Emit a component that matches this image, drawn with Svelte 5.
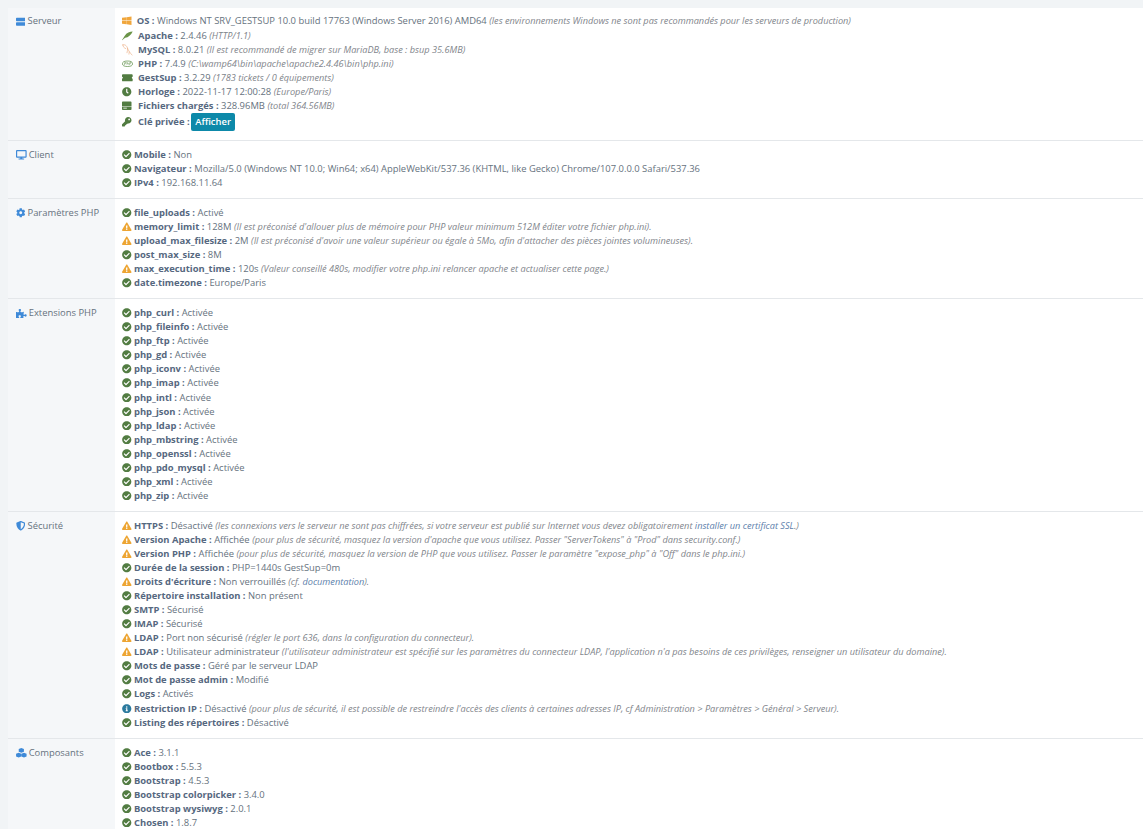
<script>
  const P = {
    check: [512, 'M504 256c0 136.967-111.033 248-248 248S8 392.967 8 256 119.033 8 256 8s248 111.033 248 248zM227.314 387.314l184-184c6.248-6.248 6.248-16.379 0-22.627l-22.627-22.627c-6.248-6.249-16.379-6.249-22.628 0L216 308.118l-70.059-70.059c-6.248-6.248-16.379-6.248-22.628 0l-22.627 22.627c-6.248 6.248-6.248 16.379 0 22.627l104 104c6.249 6.249 16.379 6.249 22.628.001z', '#527c42'],
    warn: [576, 'M569.517 440.013C587.975 472.007 564.806 512 527.94 512H48.054c-36.937 0-59.999-40.055-41.577-71.987L246.423 24.035c18.467-32.009 64.72-31.951 83.154 0l239.94 416.028zM288 354c-25.405 0-46 20.595-46 46s20.595 46 46 46 46-20.595 46-46-20.595-46-46-46zm-43.673-165.346l7.418 136c.347 6.364 5.609 11.346 11.982 11.346h48.546c6.373 0 11.635-4.982 11.982-11.346l7.418-136c.375-6.874-5.098-12.654-11.982-12.654h-63.383c-6.884 0-12.356 5.78-11.981 12.654z', '#eda533'],
    info: [512, 'M256 8C119.043 8 8 119.083 8 256c0 136.997 111.043 248 248 248s248-111.003 248-248C504 119.083 392.957 8 256 8zm0 110c23.196 0 42 18.804 42 42s-18.804 42-42 42-42-18.804-42-42 18.804-42 42-42zm56 254c0 6.627-5.373 12-12 12h-88c-6.627 0-12-5.373-12-12v-24c0-6.627 5.373-12 12-12h12v-64h-12c-6.627 0-12-5.373-12-12v-24c0-6.627 5.373-12 12-12h64c6.627 0 12 5.373 12 12v100h12c6.627 0 12 5.373 12 12v24z', '#2b7a9e'],
    clock: [512, 'M256 8C119 8 8 119 8 256s111 248 248 248 248-111 248-248S393 8 256 8zm92.49 313h0l-20 25a16 16 0 0 1-22.49 2.5h0l-67-49.72a40 40 0 0 1-15-31.23V112a16 16 0 0 1 16-16h32a16 16 0 0 1 16 16v144l58 42.5a16 16 0 0 1 2.49 22.5z', '#527c42'],
    key: [512, 'M512 176.001C512 273.203 433.202 352 336 352c-11.22 0-22.19-1.062-32.827-3.069l-24.012 27.014A23.999 23.999 0 0 1 261.223 384H224v40c0 13.255-10.745 24-24 24h-40v40c0 13.255-10.745 24-24 24H24c-13.255 0-24-10.745-24-24v-78.059c0-6.365 2.529-12.47 7.029-16.971l161.802-161.802C163.108 213.814 160 195.271 160 176 160 78.798 238.797.001 335.999 0 433.488-.001 512 78.511 512 176.001zM336 128c0 26.51 21.49 48 48 48s48-21.49 48-48-21.49-48-48-48-48 21.49-48 48z', '#527c42'],
    ticket: [576, 'M48 64h480c26.51 0 48 21.49 48 48v96c-26.51 0-48 21.49-48 48s21.49 48 48 48v96c0 26.51-21.49 48-48 48H48c-26.51 0-48-21.49-48-48v-96c26.51 0 48-21.49 48-48s-21.49-48-48-48v-96c0-26.51 21.49-48 48-48z', '#527c42'],
    hdd: [512, 'M40 24h432c22 0 40 18 40 40v200H0V64c0-22 18-40 40-40zM0 296h512v152c0 22-18 40-40 40H40c-22 0-40-18-40-40V296zm70 70v44h190v-44H70z', '#527c42'],
    feather: [576, 'M576 30C430 40 250 90 140 270 110 320 60 400 10 470l24 24c50-60 90-110 140-130 170-10 310-150 402-334z', '#6b9448'],
    windows: [512, 'M0 100l244-36v180H0V100zm0 312l244 36V268H0v144zm256 38l256 36V268H256v182zm0-388v182h256V26L256 62z', '#f0a63c']
  };

  const HEAD = {
    server: [512, 'M38 36h436c21 0 38 17 38 38v120c0 21-17 38-38 38H38c-21 0-38-17-38-38V74c0-21 17-38 38-38zm0 244h436c21 0 38 17 38 38v120c0 21-17 38-38 38H38c-21 0-38-17-38-38V318c0-21 17-38 38-38z'],
    desktop: [576, 'M528 0H48C21.5 0 0 21.5 0 48v320c0 26.5 21.5 48 48 48h192l-16 48h-72c-13.3 0-24 10.7-24 24s10.7 24 24 24h272c13.3 0 24-10.7 24-24s-10.7-24-24-24h-72l-16-48h192c26.5 0 48-21.5 48-48V48c0-26.5-21.5-48-48-48zm-16 352H64V64h448v288z'],
    cog: [512, 'M487.4 315.7l-42.6-24.6c4.3-23.2 4.3-47 0-70.2l42.6-24.6c4.9-2.8 7.1-8.6 5.5-14-11.1-35.6-30-67.8-54.7-94.6-3.8-4.1-10-5.1-14.8-2.3L380.8 110c-17.9-15.4-38.5-27.3-60.8-35.1V25.8c0-5.6-3.9-10.5-9.4-11.7-36.7-8.2-74.3-7.8-109.2 0-5.5 1.2-9.4 6.1-9.4 11.7V75c-22.2 7.9-42.8 19.8-60.8 35.1L88.7 85.5c-4.9-2.8-11-1.9-14.8 2.3-24.7 26.7-43.6 58.9-54.7 94.6-1.7 5.4.6 11.2 5.5 14L67.3 221c-4.3 23.2-4.3 47 0 70.2l-42.6 24.6c-4.9 2.8-7.1 8.6-5.5 14 11.1 35.6 30 67.8 54.7 94.6 3.8 4.1 10 5.1 14.8 2.3l42.6-24.6c17.9 15.4 38.5 27.3 60.8 35.1v49.2c0 5.6 3.9 10.5 9.4 11.7 36.7 8.2 74.3 7.8 109.2 0 5.5-1.2 9.4-6.1 9.4-11.7v-49.2c22.2-7.9 42.8-19.8 60.8-35.1l42.6 24.6c4.9 2.8 11 1.9 14.8-2.3 24.7-26.7 43.6-58.9 54.7-94.6 1.5-5.5-.7-11.3-5.6-14.1zM256 336c-44.1 0-80-35.9-80-80s35.9-80 80-80 80 35.9 80 80-35.9 80-80 80z'],
    puzzle: [576, 'M519.442 288.651c-41.519 0-59.5 31.593-82.058 31.593C377.409 320.244 432 144 432 144s-196.288 80-196.288-3.297c0-35.827 36.288-46.25 36.288-85.985C272 19.216 243.885 0 210.539 0c-34.654 0-66.366 18.891-66.366 56.346 0 41.364 31.711 59.277 31.711 81.75C175.885 207.719 0 166.758 0 166.758v333.237s178.635 41.047 178.635-28.662c0-22.473-40-40.107-40-81.471 0-37.456 29.25-56.346 63.577-56.346 33.673 0 61.788 19.216 61.788 54.717 0 39.735-36.288 50.158-36.288 85.985 0 60.803 129.675 25.73 181.23 25.73 0 0-34.725-120.101 25.827-120.101 35.962 0 46.423 36.152 86.308 36.152C556.712 416 576 387.99 576 354.443c0-34.199-18.962-65.792-56.558-65.792z'],
    shield: [512, 'M466.5 83.7l-192-80a48.15 48.15 0 0 0-36.9 0l-192 80C27.7 91.1 16 108.6 16 128c0 198.5 114.5 335.7 221.5 380.3 11.8 4.9 25.1 4.9 36.9 0C360.1 472.6 496 349.3 496 128c0-19.4-11.7-36.9-29.5-44.3zM256.1 446.3l-.1-381 175.9 73.3c-3.3 151.4-82.1 261.1-175.8 307.7z'],
    cubes: [576, 'M288 0l140 54v150l-140 58-140-58V54zM144 250l140 54v150l-140 58L4 454V304zM432 250l140 54v150l-140 58-140-58V304z']
  };

  const act = (k, v) => ({ i: 'check', k, v });
  const ext = ['curl', 'fileinfo', 'ftp', 'gd', 'iconv', 'imap', 'intl', 'json', 'ldap', 'mbstring', 'openssl', 'pdo_mysql', 'xml', 'zip'];

  const sections = [
    {
      icon: 'server', title: 'Serveur', top: true, lines: [
        { i: 'windows', k: 'OS', v: 'Windows NT SRV_GESTSUP 10.0 build 17763 (Windows Server 2016) AMD64', n: 'les environnements Windows ne sont pas recommandés pour les serveurs de production)' },
        { i: 'feather', k: 'Apache', v: '2.4.46', n: 'HTTP/1.1)' },
        { i: 'mysql', k: 'MySQL', v: '8.0.21', n: 'Il est recommandé de migrer sur MariaDB, base : bsup 35.6MB)' },
        { i: 'php', k: 'PHP', v: '7.4.9', n: 'C:\\wamp64\\bin\\apache\\apache2.4.46\\bin\\php.ini)' },
        { i: 'ticket', k: 'GestSup', v: '3.2.29', n: '1783 tickets / 0 équipements)' },
        { i: 'clock', k: 'Horloge', v: '2022-11-17 12:00:28', n: 'Europe/Paris)' },
        { i: 'hdd', k: 'Fichiers chargés', v: '328.96MB', n: 'total 364.56MB)' },
        { i: 'key', k: 'Clé privée', btn: 'Afficher' }
      ]
    },
    {
      icon: 'desktop', title: 'Client', lines: [
        act('Mobile', 'Non'),
        act('Navigateur', 'Mozilla/5.0 (Windows NT 10.0; Win64; x64) AppleWebKit/537.36 (KHTML, like Gecko) Chrome/107.0.0.0 Safari/537.36'),
        act('IPv4', '192.168.11.64')
      ]
    },
    {
      icon: 'cog', title: 'Paramètres PHP', lines: [
        act('file_uploads', 'Activé'),
        { i: 'warn', k: 'memory_limit', v: '128M', n: "Il est préconisé d'allouer plus de mémoire pour PHP valeur minimum 512M éditer votre fichier php.ini)." },
        { i: 'warn', k: 'upload_max_filesize', v: '2M', n: "Il est préconisé d'avoir une valeur supérieur ou égale à 5Mo, afin d'attacher des pièces jointes volumineuses)." },
        act('post_max_size', '8M'),
        { i: 'warn', k: 'max_execution_time', v: '120s', n: 'Valeur conseillé 480s, modifier votre php.ini relancer apache et actualiser cette page.)' },
        act('date.timezone', 'Europe/Paris')
      ]
    },
    {
      icon: 'puzzle', title: 'Extensions PHP',
      lines: ext.map((e) => act('php_' + e, 'Activée'))
    },
    {
      icon: 'shield', title: 'Sécurité', lines: [
        { i: 'warn', k: 'HTTPS', v: 'Désactivé', n: 'les connexions vers le serveur ne sont pas chiffrées, si votre serveur est publié sur Internet vous devez obligatoirement ', link: 'installer un certificat SSL', tail: '.)' },
        { i: 'warn', k: 'Version Apache', v: 'Affichée', n: 'pour plus de sécurité, masquez la version d\'apache que vous utilisez. Passer "ServerTokens" à "Prod" dans security.conf.)' },
        { i: 'warn', k: 'Version PHP', v: 'Affichée', n: 'pour plus de sécurité, masquez la version de PHP que vous utilisez. Passer le paramètre "expose_php" à "Off" dans le php.ini.)' },
        act('Durée de la session', 'PHP=1440s GestSup=0m'),
        { i: 'warn', k: "Droits d'écriture", v: 'Non verrouillés', n: 'cf. ', link: 'documentation', tail: ').' },
        act('Répertoire installation', 'Non présent'),
        act('SMTP', 'Sécurisé'),
        act('IMAP', 'Sécurisé'),
        { i: 'warn', k: 'LDAP', v: 'Port non sécurisé', n: 'régler le port 636, dans la configuration du connecteur).' },
        { i: 'warn', k: 'LDAP', v: 'Utilisateur administrateur', n: "l'utilisateur administrateur est spécifié sur les paramètres du connecteur LDAP, l'application n'a pas besoins de ces privilèges, renseigner un utilisateur du domaine)." },
        act('Mots de passe', 'Géré par le serveur LDAP'),
        act('Mot de passe admin', 'Modifié'),
        act('Logs', 'Activés'),
        { i: 'info', k: 'Restriction IP', v: 'Désactivé', n: "pour plus de sécurité, il est possible de restreindre l'accès des clients à certaines adresses IP, cf Administration > Paramètres > Général > Serveur)." },
        act('Listing des répertoires', 'Désactivé')
      ]
    },
    {
      icon: 'cubes', title: 'Composants', lines: [
        act('Ace', '3.1.1'),
        act('Bootbox', '5.5.3'),
        act('Bootstrap', '4.5.3'),
        act('Bootstrap colorpicker', '3.4.0'),
        act('Bootstrap wysiwyg', '2.0.1'),
        act('Chosen', '1.8.7')
      ]
    }
  ];
</script>

<div class="page">
  <div class="table">
    {#each sections as s}
      <div class="row" class:top={s.top}>
        <div class="head">
          <svg class="hicon" style="width: {HEAD[s.icon][0] / 54}px" viewBox="0 0 {HEAD[s.icon][0]} 512"><path d={HEAD[s.icon][1]} /></svg>
          <span>{s.title}</span>
        </div>
        <div class="body">
          {#each s.lines as l}
            <div class="line" class:btnline={l.btn}>
              {#if l.i === 'mysql'}
                <svg class="ic tall" viewBox="0 0 24 26" fill="none" stroke="#eaa97c" stroke-width="1.3" stroke-linecap="round">
                  <path d="M1 2c5-2 9 1 11 7 2 5 5 10 10 15M2 2c0 4 3 7 6 8M12 9c0 4 0 7-1 10M16 17c0 2-1 3-1 5" />
                </svg>
              {:else if l.i === 'php'}
                <svg class="ic" viewBox="0 0 24 14" fill="none" stroke="#5f9049" stroke-width="1.6">
                  <ellipse cx="12" cy="7" rx="11" ry="6" />
                  <path d="M5 10l1-6h2.500c1 0 1 3-2.500 3M10.500 9l1-6M11 6h3l-.5 3M16 10l1-6h2.500c1 0 1 3-2.500 3" stroke-width="1.100" />
                </svg>
              {:else}
                <svg class="ic {l.i}" preserveAspectRatio="xMinYMid meet" viewBox="0 0 {P[l.i][0]} 512"><path fill={P[l.i][2]} d={P[l.i][1]} /></svg>
              {/if}
              <b>{l.k} :</b>
              {#if l.btn}
                <button type="button">{l.btn}</button>
              {:else}
                {l.v}
              {/if}
              {#if l.n}
                <i>({l.n}{#if l.link}<a href="#top">{l.link}</a>{/if}{l.tail ?? ''}</i>
              {/if}
            </div>
          {/each}
        </div>
      </div>
    {/each}
  </div>
</div>

<style>
  :global(body) {
    margin: 0;
    background: #f1f4f6;
  }

  .page {
    padding: 8px 0 0 8px;
    height: 821px;
    overflow: hidden;
    font-family: 'Open Sans', sans-serif;
    font-size: 9.42px;
    line-height: 14.05px;
    color: #66727e;
  }

  .table {
    background: #fff;
  }

  .row {
    display: flex;
    border-bottom: 1px solid #e4e7ea;
  }

  .head {
    width: 91px;
    flex: none;
    padding: 7px 8px 8px 8px;
    background: #f5f7f9;
    display: flex;
    align-items: flex-start;
    gap: 2px;
    color: #66727e;
  }

  .row.top .head {
    padding-top: 6px;
  }

  .hicon {
    height: 9.500px;
    margin-top: 2.500px;
    fill: #3f8ad8;
    flex: none;
  }

  .body {
    flex: 1;
    padding: 7px 0 8px 7px;
  }

  .row.top .body {
    padding: 6px 0 8px 7px;
  }

  .row.top .line:first-child {
    margin-bottom: 1px;
  }

  .line {
    white-space: nowrap;
    height: 14.05px;
  }

  .btnline {
    height: 18.5px;
    line-height: 18.5px;
  }

  .ic {
    display: inline-block;
    width: 9.500px;
    height: 9.500px;
    vertical-align: -1.5px;
  }

  .row.top .ic {
    width: 11px;
    margin-right: 2.600px;
  }

  .row.top .ic.windows {
    width: 10px;
    margin-right: 2.300px;
  }

  .row.top .ic.tall {
    height: 12px;
    vertical-align: -3px;
  }

  b {
    font-weight: 700;
    color: #566880;
  }

  i {
    color: #7f858b;
    font-size: 9.18px;
  }

  a {
    color: #5c80ab;
    text-decoration: none;
  }

  button {
    font: inherit;
    line-height: 18px;
    font-weight: 600;
    color: #fff;
    background: #0d89a9;
    border: 0;
    border-radius: 2px;
    height: 18px;
    width: 44px;
    padding: 0;
    margin-left: -1px;
    vertical-align: top;
  }
</style>
